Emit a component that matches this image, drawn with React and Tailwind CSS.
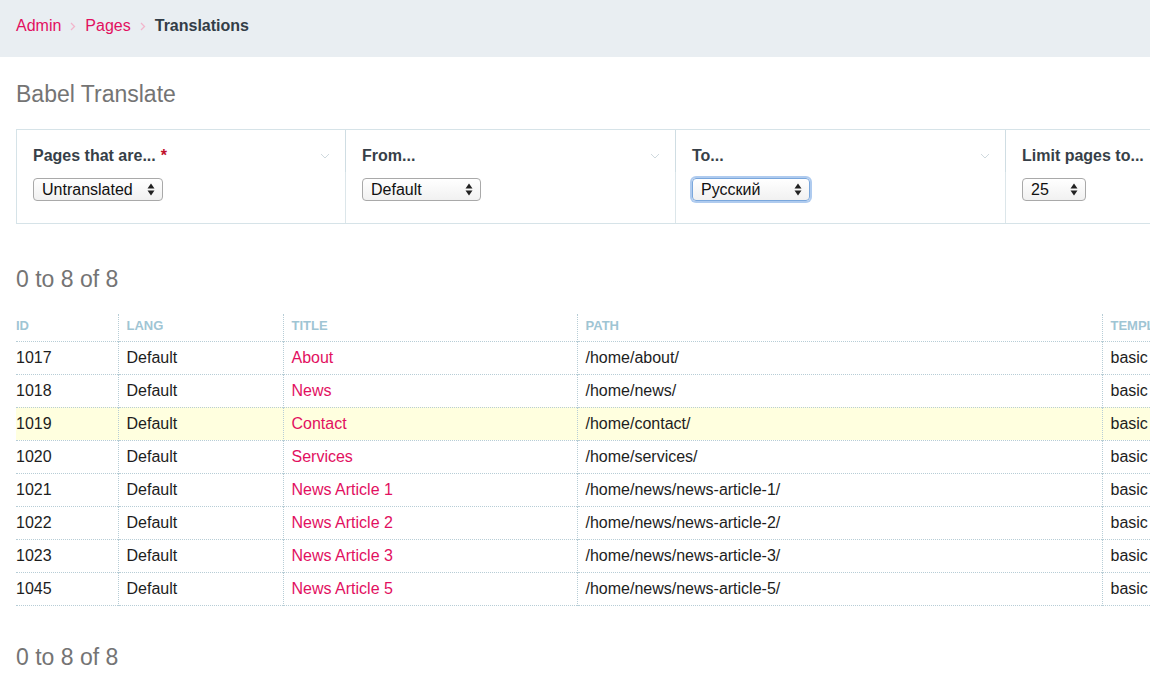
import React from 'react';

const rows = [
  { id: 1017, lang: 'Default', title: 'About', path: '/home/about/' },
  { id: 1018, lang: 'Default', title: 'News', path: '/home/news/' },
  { id: 1019, lang: 'Default', title: 'Contact', path: '/home/contact/', active: true },
  { id: 1020, lang: 'Default', title: 'Services', path: '/home/services/' },
  { id: 1021, lang: 'Default', title: 'News Article 1', path: '/home/news/news-article-1/' },
  { id: 1022, lang: 'Default', title: 'News Article 2', path: '/home/news/news-article-2/' },
  { id: 1023, lang: 'Default', title: 'News Article 3', path: '/home/news/news-article-3/' },
  { id: 1045, lang: 'Default', title: 'News Article 5', path: '/home/news/news-article-5/' },
];

function Crumb() {
  return (
    <svg width="6" height="9" viewBox="0 0 6 9" className="mx-[9px]">
      <path d="M1 1l3.5 3.5L1 8" fill="none" stroke="#f2b6cc" strokeWidth="1.3" />
    </svg>
  );
}

function Arrows() {
  return (
    <svg width="8" height="13" viewBox="0 0 8 13">
      <path d="M4 0.5L7.5 5.5H0.5Z" fill="#222" />
      <path d="M4 12.5L7.5 7.5H0.5Z" fill="#222" />
    </svg>
  );
}

function Select({ value, width, focus }) {
  return (
    <div
      className={`flex h-[23px] items-center justify-between rounded-[4px] border bg-gradient-to-b from-white to-[#f1f1f1] pl-[8px] pr-[7px] text-[16px] text-[#111] ${
        focus ? 'border-[#7aa7dc] shadow-[0_0_0_2px_rgba(110,160,225,0.55)]' : 'border-[#a9a9a9]'
      }`}
      style={{ width }}
    >
      <span>{value}</span>
      <Arrows />
    </div>
  );
}

function Filter({ label, required, value, width, focus, first }) {
  return (
    <div className={`relative h-full shrink-0 px-[16px] pt-[14px] ${first ? 'w-[328px]' : 'w-[330px] border-l border-[#dce6ea]'}`}>
      {!first && <div className="absolute -left-px top-0 h-[42px] w-px bg-[#cfdde3]" />}
      <div className="flex items-center justify-between">
        <div className="text-[16px] font-bold text-[#373f48]">
          {label}
          {required && <span className="ml-[5px] text-[#c0102a]">*</span>}
        </div>
        <svg width="10" height="6" viewBox="0 0 10 6" className="mr-[-1px]">
          <path d="M1 1l4 4 4-4" fill="none" stroke="#cfd9de" strokeWidth="1" />
        </svg>
      </div>
      <div className="mt-[10px]">
        <Select value={value} width={width} focus={focus} />
      </div>
    </div>
  );
}

export default function App() {
  return (
    <div className="h-[687px] w-[1150px] overflow-hidden bg-white font-['Liberation_Sans',Arial,sans-serif]">
      <div className="flex h-[57px] items-center bg-[#e9eef2] px-[16px] pb-[5px] text-[16px]">
        <span className="text-[#e2105f]">Admin</span>
        <Crumb />
        <span className="text-[#e2105f]">Pages</span>
        <Crumb />
        <span className="font-bold text-[#333d47]">Translations</span>
      </div>

      <div className="pl-[16px]">
        <h1 className="mt-[23px] text-[23px] leading-[28px] text-[#747474]">Babel Translate</h1>

        <div className="mt-[21px] flex h-[95px] w-[1400px] border border-r-0 border-[#d6e3e8]">
          <Filter first label="Pages that are..." required value="Untranslated" width={130} />
          <Filter label="From..." value="Default" width={119} />
          <Filter label="To..." value="Русский" width={118} focus />
          <Filter label="Limit pages to..." value="25" width={64} />
        </div>

        <div className="mt-[41px] text-[23px] leading-[28px] text-[#747474]">0 to 8 of 8</div>

        <table className="mt-[21px] w-[1250px] border-collapse text-[16px] text-[#1d1d1d]">
          <thead>
            <tr className="h-[27px] border-b border-dotted border-[#b7cdd6] text-left text-[13px] font-bold uppercase text-[#9fc5d4]">
              <th className="w-[102px] p-0 pb-[4px]">ID</th>
              <th className="w-[165px] border-l border-dotted border-[#b7cdd6] pb-[4px] pl-[8px]">Lang</th>
              <th className="w-[294px] border-l border-dotted border-[#b7cdd6] pb-[4px] pl-[8px]">Title</th>
              <th className="w-[525px] border-l border-dotted border-[#b7cdd6] pb-[4px] pl-[8px]">Path</th>
              <th className="border-l border-dotted border-[#b7cdd6] pb-[4px] pl-[8px]">Template</th>
            </tr>
          </thead>
          <tbody>
            {rows.map(r => (
              <tr
                key={r.id}
                className={`h-[33px] border-b border-dotted border-[#b7cdd6] ${r.active ? 'bg-[#ffffdf]' : ''}`}
              >
                <td className="p-0">{r.id}</td>
                <td className="border-l border-dotted border-[#b7cdd6] pl-[8px]">{r.lang}</td>
                <td className="border-l border-dotted border-[#b7cdd6] pl-[8px] text-[#e2105f]">{r.title}</td>
                <td className="border-l border-dotted border-[#b7cdd6] pl-[8px]">{r.path}</td>
                <td className="border-l border-dotted border-[#b7cdd6] pl-[8px]">basic</td>
              </tr>
            ))}
          </tbody>
        </table>

        <div className="mt-[37px] text-[23px] leading-[28px] text-[#747474]">0 to 8 of 8</div>
      </div>
    </div>
  );
}
